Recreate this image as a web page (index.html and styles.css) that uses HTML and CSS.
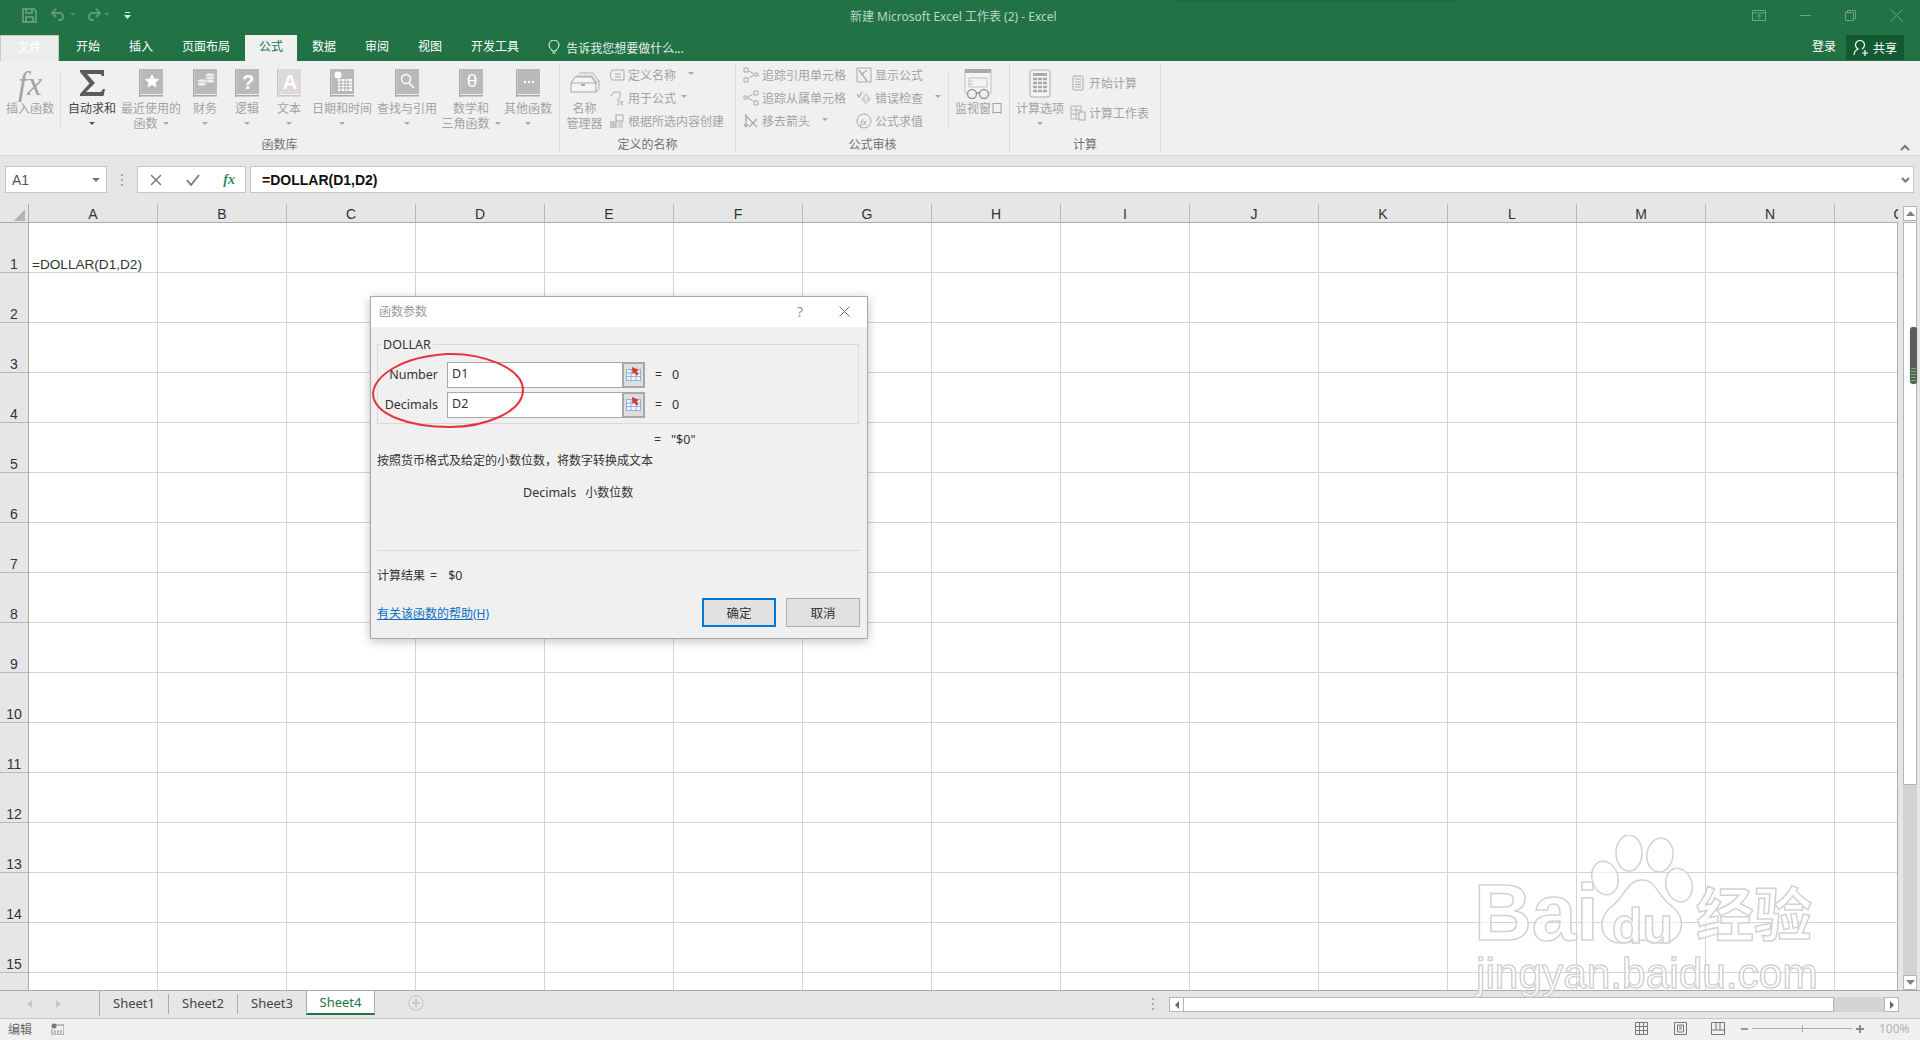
FILE: index.html
```html
<!DOCTYPE html>
<html lang="zh-CN">
<head>
<meta charset="UTF-8" />
<title>新建 Microsoft Excel 工作表 (2) - Excel</title>
<link rel="stylesheet" href="styles.css">
</head>
<body>

<svg class="defs" width="0" height="0">
  <symbol id="book" viewBox="0 0 30 32">
    <rect x="3" y="0" width="1.5" height="28" fill="#a8a8a8"/>
    <rect x="5" y="0" width="22" height="25" fill="#b9b9b9"/>
    <rect x="4" y="26" width="23" height="1.5" fill="#a8a8a8"/>
  </symbol>
  <symbol id="refedit" viewBox="0 0 15 14">
    <rect y="2" width="15" height="12" fill="#eef3fa"/>
    <path d="M0 2.500h15M0 6h15M0 9.500h15M0 13.500h15M.5 2v12M5 2v12M10 2v12M14.500 2v12" stroke="#7ea6d4" stroke-width=".8"/>
    <path d="M6 0l7 3-2.500 1.200 2 3-2 1.300-2-3-2 1.500z" fill="#d9352b"/>
  </symbol>
</svg>

<div class="topbar">
  <div class="strip"></div>
  <div class="titlerow">
    <svg class="qat-save" width="15" height="15" viewBox="0 0 15 15"><path d="M1 1h11l2 2v11H1z M4 1v4h6V1 M4 14V9h7v5" fill="none" stroke="#6fa287" stroke-width="1.6"/></svg>
    <svg class="qat-undo" width="16" height="13" viewBox="0 0 16 13"><path d="M5 1L1 5l4 4M1 5h9a4 4 0 0 1 0 7H7" fill="none" stroke="#5f9a7a" stroke-width="2"/></svg>
    <span class="qat-caret"></span>
    <svg class="qat-redo" width="16" height="13" viewBox="0 0 16 13"><path d="M11 1l4 4-4 4M15 5H6a4 4 0 0 0 0 7h3" fill="none" stroke="#5f9a7a" stroke-width="2"/></svg>
    <span class="qat-caret"></span>
    <svg class="qat-more" width="7" height="7" viewBox="0 0 7 7"><path d="M1 0h5v1H1z M0 3h7L3.5 7z" fill="#dfeee5"/></svg>
    <div class="doc-title">新建 Microsoft Excel 工作表 (2) - Excel</div>
    <div class="win-btns">
      <svg width="14" height="11" viewBox="0 0 14 11"><path d="M.5.5h13v10H.5zM.5 3h13M7 9V5M5 6.5L7 4.500l2 2" fill="none" stroke="#6fa287"/></svg>
      <svg width="11" height="11" viewBox="0 0 11 11"><path d="M0 5.500h11" stroke="#6fa287"/></svg>
      <svg width="11" height="11" viewBox="0 0 11 11"><path d="M.5 2.500h8v8h-8zM2.500 2.500v-2h8v8h-2" fill="none" stroke="#6fa287"/></svg>
      <svg width="13" height="13" viewBox="0 0 13 13"><path d="M.5.5l12 12M12.500.5l-12 12" stroke="#6fa287"/></svg>
    </div>
  </div>
  <div class="tabrow">
    <div class="tab tab-file">文件</div>
    <div class="tab">开始</div>
    <div class="tab">插入</div>
    <div class="tab">页面布局</div>
    <div class="tab tab-active">公式</div>
    <div class="tab">数据</div>
    <div class="tab">审阅</div>
    <div class="tab">视图</div>
    <div class="tab">开发工具</div>
    <div class="tellme">
      <svg width="12" height="15" viewBox="0 0 12 15"><path d="M4 11C3.500 8.500 1 8 1 5a5 5 0 0 1 10 0c0 3-2.500 3.500-3 6zM4.500 13h3" fill="none" stroke="#fff"/></svg>
      <span>告诉我您想要做什么...</span>
    </div>
    <div class="login">登录</div>
    <div class="share">
      <svg width="16" height="16" viewBox="0 0 16 16"><path d="M1 15c0-4 2-5 4-6a4.500 4.500 0 1 1 4 0M9 13h6M12 10v6" fill="none" stroke="#fff" stroke-width="1.200"/></svg>
      <span>共享</span>
    </div>
  </div>
</div>

<div class="ribbon">
  <div class="group g1">
    <div class="group-body">
      <div class="big w60"><div class="fx-glyph">fx</div><span>插入函数</span></div>
      <div class="mini-sep"></div>
      <div class="big w60 dark">
        <svg class="big-icon" viewBox="0 0 30 32"><path d="M3 1H27V7H25L23.500 5H10L18 14L9 23H24L26 20H28L26.500 27H3V25L12.500 14.500L3 3Z" fill="#5a5a5a"/></svg>
        <span>自动求和</span><i class="caret"></i>
      </div>
      <div class="big w58">
        <svg class="big-icon" viewBox="0 0 30 32"><use href="#book"/><path d="M16 5l2.200 4.600 5 .6-3.700 3.400 1 5-4.500-2.500-4.500 2.500 1-5-3.700-3.400 5-.6z" fill="#fff"/></svg>
        <span>最近使用的</span><span>函数<i class="caret inline"></i></span>
      </div>
      <div class="big w50">
        <svg class="big-icon" viewBox="0 0 30 32"><use href="#book"/><g fill="#eee" stroke="#b9b9b9" stroke-width=".6"><ellipse cx="20" cy="6" rx="4.500" ry="2"/><ellipse cx="20" cy="9" rx="4.500" ry="2"/><ellipse cx="20" cy="12" rx="4.500" ry="2"/><ellipse cx="12" cy="12" rx="4.500" ry="2"/><ellipse cx="12" cy="15" rx="4.500" ry="2"/></g></svg>
        <span>财务</span><i class="caret"></i>
      </div>
      <div class="big w34">
        <svg class="big-icon" viewBox="0 0 30 32"><use href="#book"/><text class="book-text" x="16" y="20" text-anchor="middle">?</text></svg>
        <span>逻辑</span><i class="caret"></i>
      </div>
      <div class="big w50">
        <svg class="big-icon" viewBox="0 0 30 32"><rect x="3" width="1.500" height="28" fill="#c8c4c8"/><rect x="5" width="22" height="25" fill="#dcd8dc"/><rect x="4" y="26" width="23" height="1.500" fill="#c8c4c8"/><text class="book-text" x="16" y="20" text-anchor="middle">A</text></svg>
        <span>文本</span><i class="caret"></i>
      </div>
      <div class="big w56">
        <svg class="big-icon" viewBox="0 0 30 32"><use href="#book"/><circle cx="11" cy="6" r="3.500" fill="#fff"/><rect x="11" y="10" width="14" height="12" fill="#fff"/><path d="M11 13h14M11 16h14M11 19h14M14 10v12M18 10v12M21 10v12" stroke="#999" stroke-width=".8"/></svg>
        <span>日期和时间</span><i class="caret"></i>
      </div>
      <div class="big w74">
        <svg class="big-icon" viewBox="0 0 30 32"><use href="#book"/><circle cx="14" cy="10" r="4.500" fill="none" stroke="#fff" stroke-width="1.500"/><path d="M17 14l5 5" stroke="#fff" stroke-width="1.500"/></svg>
        <span>查找与引用</span><i class="caret"></i>
      </div>
      <div class="big w54">
        <svg class="big-icon" viewBox="0 0 30 32"><use href="#book"/><text class="book-text theta" x="16" y="18" text-anchor="middle">θ</text></svg>
        <span>数学和</span><span>三角函数<i class="caret inline"></i></span>
      </div>
      <div class="big w60">
        <svg class="big-icon" viewBox="0 0 30 32"><use href="#book"/><circle cx="12" cy="13" r="1.200" fill="#fff"/><circle cx="16" cy="13" r="1.200" fill="#fff"/><circle cx="20" cy="13" r="1.200" fill="#fff"/></svg>
        <span>其他函数</span><i class="caret"></i>
      </div>
    </div>
    <div class="group-label">函数库</div>
  </div>

  <div class="group g2">
    <div class="group-body">
      <div class="big w49">
        <svg class="big-icon" viewBox="0 0 30 32"><path d="M26 14l3-3v9l-3 3M9 4h14l5 7M6 7h16l4 6" fill="none" stroke="#b0b0b0"/><path d="M1 14l4-6h16l5 6" fill="#f4f4f4" stroke="#a8a8a8"/><path d="M1 14h25v9H1z" fill="#f4f4f4" stroke="#a8a8a8"/><rect x="11" y="15" width="4" height="2" fill="#a8a8a8"/></svg>
        <span>名称</span><span>管理器</span>
      </div>
      <div class="smalls">
        <div class="small"><svg width="16" height="16" viewBox="0 0 16 16"><path d="M3 3h12v10H3L1 8z" fill="none" stroke="#aaa"/><path d="M6 7h6M6 10h6" stroke="#aaa"/></svg><span>定义名称</span><i class="caret inline far"></i></div>
        <div class="small"><svg width="16" height="16" viewBox="0 0 16 16"><path d="M2 6l3-4h6v5l-3 3" fill="none" stroke="#aaa"/><text class="mini-fx" x="8" y="15">fx</text></svg><span>用于公式</span><i class="caret inline"></i></div>
        <div class="small"><svg width="16" height="16" viewBox="0 0 16 16"><rect x="1" y="8" width="7" height="7" fill="#c4c4c4"/><rect x="7" y="2" width="7" height="6" fill="none" stroke="#aaa"/><rect x="9" y="9" width="5" height="6" fill="#d4d4d4"/></svg><span>根据所选内容创建</span></div>
      </div>
    </div>
    <div class="group-label">定义的名称</div>
  </div>

  <div class="group g3">
    <div class="group-body">
      <div class="smalls col-trace">
        <div class="small"><svg width="16" height="16" viewBox="0 0 16 16"><path d="M1 1h4v4H1zM1 11h4v4H1zM12 6h3v3h-3zM6 4l5 3M6 11l5-3" fill="none" stroke="#aaa"/></svg><span>追踪引用单元格</span></div>
        <div class="small"><svg width="16" height="16" viewBox="0 0 16 16"><path d="M1 6h3v3H1zM11 1h4v4h-4zM11 11h4v4h-4zM5 7l5-3M5 8l5 3" fill="none" stroke="#aaa"/></svg><span>追踪从属单元格</span></div>
        <div class="small"><svg width="16" height="16" viewBox="0 0 16 16"><path d="M3 1v13M3 14l-2-3M3 14l2-3M2 2l12 12M14 6l-8 8" fill="none" stroke="#aaa" stroke-width="1.300"/></svg><span>移去箭头</span><i class="caret inline far"></i></div>
      </div>
      <div class="smalls col-audit">
        <div class="small"><svg width="16" height="16" viewBox="0 0 16 16"><path d="M1 1h14v14H1z" fill="none" stroke="#aaa"/><path d="M3 3l8 11M11 3l-6 5" fill="none" stroke="#aaa" stroke-width="1.300"/></svg><span>显示公式</span></div>
        <div class="small"><svg width="16" height="16" viewBox="0 0 16 16"><path d="M1 4l2 3 3-5" fill="none" stroke="#aaa" stroke-width="1.300"/><path d="M10 3l5 6-5 6-5-6z" fill="#cfcfcf"/><path d="M10 6v4M10 11v1.500" stroke="#fff" stroke-width="1.400"/></svg><span>错误检查</span><i class="caret inline far"></i></div>
        <div class="small"><svg width="16" height="16" viewBox="0 0 16 16"><circle cx="8" cy="8" r="7" fill="none" stroke="#aaa"/><text class="mini-fx" x="4" y="12">fx</text></svg><span>公式求值</span></div>
      </div>
      <div class="mini-sep"></div>
      <div class="big w60">
        <svg class="big-icon" viewBox="0 0 30 32"><rect x="1" y="0" width="26" height="24" fill="#f4f4f4" stroke="#c4c4c4"/><rect x="1" y="0" width="26" height="4" fill="#aaa"/><path d="M5 9h18v9H5zM5 12h4M5 15h4" fill="none" stroke="#c0c0c0"/><circle cx="8" cy="25" r="4.500" fill="#f0f0f0" stroke="#999" stroke-width="1.500"/><circle cx="20" cy="25" r="4.500" fill="#f0f0f0" stroke="#999" stroke-width="1.500"/><path d="M12.500 24h3" stroke="#999" stroke-width="1.500"/></svg>
        <span>监视窗口</span>
      </div>
    </div>
    <div class="group-label">公式审核</div>
  </div>

  <div class="group g4">
    <div class="group-body">
      <div class="big w60">
        <svg class="big-icon" viewBox="0 0 30 32"><rect x="5" y="1" width="20" height="27" rx="2" fill="#f4f4f4" stroke="#aaa"/><rect x="8" y="4" width="14" height="3" fill="#aaa"/><path d="M8 10h14M8 14h14M8 18h14M8 22h14" stroke="#aaa" stroke-width="2.500" stroke-dasharray="4 1"/></svg>
        <span>计算选项</span><i class="caret"></i>
      </div>
      <div class="smalls calc">
        <div class="small"><svg width="16" height="16" viewBox="0 0 16 16"><rect x="3" y="1" width="10" height="14" rx="1" fill="none" stroke="#aaa"/><path d="M5 4h6M5 7h6M5 9.500h6M5 12h6" stroke="#aaa" stroke-width="1.200"/></svg><span>开始计算</span></div>
        <div class="small"><svg width="16" height="16" viewBox="0 0 16 16"><path d="M1 1h10v13H1zM1 5h10M1 9h10M6 1v13" fill="none" stroke="#b4b4b4"/><rect x="9" y="7" width="6" height="8" fill="#f0f0f0" stroke="#aaa"/></svg><span>计算工作表</span></div>
      </div>
    </div>
    <div class="group-label">计算</div>
  </div>

  <svg class="collapse" width="10" height="7" viewBox="0 0 10 7"><path d="M1 6l4-4 4 4" fill="none" stroke="#777" stroke-width="2"/></svg>
</div>

<div class="formulabar">
  <div class="namebox"><span>A1</span><i class="caret dark-caret"></i></div>
  <div class="grip"><b></b><b></b><b></b></div>
  <div class="fbtns">
    <svg width="12" height="12" viewBox="0 0 12 12"><path d="M1 1l10 10M11 1L1 11" stroke="#808080" stroke-width="1.600"/></svg>
    <svg width="14" height="12" viewBox="0 0 14 12"><path d="M1 6l4 5 8-10" fill="none" stroke="#808080" stroke-width="2"/></svg>
    <span class="fx-green">fx</span>
  </div>
  <div class="finput"><span>=DOLLAR(D1,D2)</span><svg width="9" height="6" viewBox="0 0 9 6"><path d="M1 1l3.500 3.500L8 1" fill="none" stroke="#777" stroke-width="2"/></svg></div>
</div>

<div class="workarea">
  <div class="sheet">
    <div class="colheads">
      <div class="corner"><svg width="11" height="12" viewBox="0 0 11 12"><path d="M11 0v12H0z" fill="#b4b4b4"/></svg></div>
      <div class="cols">
        <div class="col">A</div><div class="col">B</div><div class="col">C</div><div class="col">D</div><div class="col">E</div><div class="col">F</div><div class="col">G</div><div class="col">H</div><div class="col">I</div><div class="col">J</div><div class="col">K</div><div class="col">L</div><div class="col">M</div><div class="col">N</div><div class="col">O</div>
      </div>
    </div>
    <div class="sheetbody">
      <div class="rows">
        <div class="rowhead">1</div><div class="rowhead">2</div><div class="rowhead">3</div><div class="rowhead">4</div><div class="rowhead">5</div><div class="rowhead">6</div><div class="rowhead">7</div><div class="rowhead">8</div><div class="rowhead">9</div><div class="rowhead">10</div><div class="rowhead">11</div><div class="rowhead">12</div><div class="rowhead">13</div><div class="rowhead">14</div><div class="rowhead">15</div>
      </div>
      <div class="cells">
        <div class="cell-a1">=DOLLAR(D1,D2)</div>
      </div>
    </div>
  </div>
  <div class="vscroll">
    <div class="sbtn"><svg width="9" height="5" viewBox="0 0 9 5"><path d="M4.500 0L9 5H0z" fill="#808080"/></svg></div>
    <div class="vtrack-on"></div>
    <div class="vtrack-off"></div>
    <div class="sbtn"><svg width="9" height="5" viewBox="0 0 9 5"><path d="M0 0h9L4.500 5z" fill="#808080"/></svg></div>
  </div>
</div>

<div class="tabbar">
  <div class="tabnav">
    <svg width="5" height="8" viewBox="0 0 5 8"><path d="M5 0v8L0 4z" fill="#c8c8c8"/></svg>
    <svg width="5" height="8" viewBox="0 0 5 8"><path d="M0 0v8l5-4z" fill="#c8c8c8"/></svg>
  </div>
  <div class="stab">Sheet1</div>
  <div class="stab">Sheet2</div>
  <div class="stab">Sheet3</div>
  <div class="stab stab-active">Sheet4</div>
  <svg class="addsheet" width="16" height="16" viewBox="0 0 16 16"><circle cx="8" cy="8" r="7.300" fill="none" stroke="#c4c4c4"/><path d="M8 4v8M4 8h8" stroke="#c4c4c4" stroke-width="1.600"/></svg>
  <div class="hgrip"><b></b><b></b><b></b></div>
  <div class="hscroll">
    <div class="hbtn"><svg width="4" height="8" viewBox="0 0 4 8"><path d="M4 0v8L0 4z" fill="#666"/></svg></div>
    <div class="hthumb"></div>
    <div class="htrack"></div>
    <div class="hbtn"><svg width="4" height="8" viewBox="0 0 4 8"><path d="M0 0v8l4-4z" fill="#666"/></svg></div>
  </div>
</div>

<div class="statusbar">
  <span>编辑</span>
  <svg class="macro" width="13" height="12" viewBox="0 0 13 12"><circle cx="3" cy="3" r="2.500" fill="#777"/><path d="M5 2h8v10H1V6" fill="none" stroke="#888"/><path d="M3 8h8M3 10h8" stroke="#888" stroke-dasharray="2 1"/></svg>
  <div class="status-right">
    <svg width="13" height="13" viewBox="0 0 13 13"><path d="M.5.5h12v12H.5zM.5 4.500h12M.5 8.500h12M4.500.5v12M8.500.5v12" fill="none" stroke="#777"/></svg>
    <svg width="13" height="13" viewBox="0 0 13 13"><path d="M.5.5h12v12H.5zM3.500 3h6v7h-6zM5 5h3M5 7h3" fill="none" stroke="#777"/></svg>
    <svg width="14" height="13" viewBox="0 0 14 13"><path d="M.5.5h13v12H.5zM.5 8h13M5 .5V8M9 .5V8" fill="none" stroke="#777"/></svg>
    <div class="zoomer">
      <i class="zminus"></i>
      <div class="zslider"><i></i></div>
      <i class="zplus"></i>
    </div>
    <span class="zoomval">100%</span>
  </div>
</div>

<!-- scroll position thumb, sits over the scrollbar -->
<div class="vthumb"><i></i></div>

<div class="dialog">
  <div class="dlg-head">
    <span class="dlg-title">函数参数</span>
    <span class="dlg-help">?</span>
    <svg class="dlg-close" width="11" height="11" viewBox="0 0 11 11"><path d="M.5.5l10 10M10.500.5l-10 10" stroke="#777"/></svg>
  </div>
  <div class="dlg-body">
    <fieldset class="args">
      <legend>DOLLAR</legend>
      <div class="arg">
        <label>Number</label>
        <div class="arg-input">D1</div>
        <div class="refbtn"><svg width="15" height="14"><use href="#refedit"/></svg></div>
        <span class="eq">=</span><span>0</span>
      </div>
      <div class="arg">
        <label>Decimals</label>
        <div class="arg-input">D2</div>
        <div class="refbtn"><svg width="15" height="14"><use href="#refedit"/></svg></div>
        <span class="eq">=</span><span>0</span>
      </div>
    </fieldset>
    <div class="fn-result"><span class="eq">=</span><span>"$0"</span></div>
    <div class="fn-desc">按照货币格式及给定的小数位数，将数字转换成文本</div>
    <div class="fn-argdesc"><span>Decimals</span><span class="cjk12">小数位数</span></div>
    <div class="dlg-sep"></div>
    <div class="calc-result"><span class="cjk12">计算结果</span><span class="calc-eq">=</span><span>$0</span></div>
    <div class="dlg-foot">
      <a class="help-link">有关该函数的帮助(H)</a>
      <button class="dlg-btn dlg-ok">确定</button>
      <button class="dlg-btn">取消</button>
    </div>
  </div>
</div>

<svg class="redcircle" width="160" height="80" viewBox="0 0 160 80">
  <path d="M3 43C5 26 30 7 77 4C113 3 153 18 153 40C153 62 115 77 80 77C40 77 3 65 3 43Z" fill="none" stroke="#e8323c" stroke-width="2"/>
</svg>

<!-- baidu watermark, bottom right -->
<div class="watermark">
  <svg class="paw" width="110" height="110" viewBox="0 0 110 110">
    <g fill="rgba(255,255,255,.6)" stroke="#d2d2d2" stroke-width="1.500">
      <ellipse cx="20" cy="43" rx="13" ry="17" transform="rotate(-15 20 43)"/>
      <ellipse cx="44" cy="18" rx="13" ry="18"/>
      <ellipse cx="75" cy="20" rx="13" ry="17" transform="rotate(8 75 20)"/>
      <ellipse cx="94" cy="50" rx="13" ry="17" transform="rotate(-15 94 50)"/>
      <path d="M57 45C72 45 72 62 88 72C104 86 96 108 76 108C66 108 64 105 57 105C48 105 46 108 36 108C16 108 10 86 26 72C40 62 42 45 57 45Z"/>
    </g>
  </svg>
  <span class="wm-bai">Bai</span>
  <span class="wm-du">du</span>
  <span class="wm-jy">经验</span>
  <span class="wm-url">jingyan.baidu.com</span>
</div>

</body>
</html>
```

FILE: styles.css
```css
* { box-sizing: border-box; }
html, body { margin: 0; padding: 0; }
body {
  width: 1920px;
  height: 1040px;
  overflow: hidden;
  position: relative;
  background: #e6e6e6;
  font-family: "Noto Sans", "Noto Sans CJK SC", sans-serif;
  font-size: 12px;
  color: #444;
}
i { font-style: normal; display: block; }
.defs { position: absolute; }

/* title bar + tabs */
.topbar { height: 61px; background: #217346; color: #fff; position: relative; }
.strip { position: absolute; left: 1175px; top: 0; width: 282px; height: 2px; background: #1d6a3f; }
.titlerow { height: 35px; display: flex; align-items: center; padding-left: 22px; position: relative; }
.qat-save { margin-top: -5px; }
.qat-undo { margin-left: 14px; margin-top: -6px; }
.qat-redo { margin-left: 9px; margin-top: -6px; }
.qat-caret { margin: -6px 0 0 3px; border-top: 3px solid #4d8e6b; border-left: 3px solid transparent; border-right: 3px solid transparent; }
.qat-more { margin-left: 14px; margin-top: -5px; }
.doc-title { position: absolute; left: 850px; top: 8px; color: #bcd6c6; line-height: 17px; white-space: nowrap; }
.win-btns { position: absolute; left: 1752px; top: 9px; display: flex; align-items: center; gap: 34px; }
.tabrow { height: 26px; display: flex; align-items: stretch; gap: 1px; position: relative; }
.tab { padding: 0 14px; line-height: 24px; white-space: nowrap; }
.tab-file { width: 59px; padding: 0; text-align: center; background: #ececec; border: 1px solid #c9c9c9; border-bottom: 0; margin-right: 2px; }
.tab-active { background: #f0f0f0; color: #217346; }
.tellme { display: flex; align-items: center; gap: 6px; margin-left: 14px; color: #e6f0ea; padding-bottom: 1px; }
.login { position: absolute; left: 1812px; top: 0; line-height: 24px; }
.share { position: absolute; left: 1846px; top: 0; width: 58px; height: 25px; background: #125b32; display: flex; align-items: center; gap: 4px; padding-left: 7px; }

/* ribbon */
.ribbon { height: 95px; background: #f0f0f0; border-bottom: 1px solid #d6d6d6; display: flex; padding-top: 4px; position: relative; color: #a3a3a3; }
.group { height: 86px; border-right: 1px solid #dadada; display: flex; flex-direction: column; flex-shrink: 0; }
.g1 { width: 560px; }
.g2 { width: 176px; }
.g3 { width: 274px; }
.g4 { width: 151px; }
.group-body { height: 72px; display: flex; }
.g1 .mini-sep { margin-right: 1px; }
.group-label { height: 14px; line-height: 15px; text-align: center; color: #707070; }
.mini-sep { width: 1px; height: 56px; margin-top: 6px; background: #dcdcdc; flex-shrink: 0; }
.big { display: flex; flex-direction: column; align-items: center; padding-top: 4px; line-height: 15px; white-space: nowrap; flex-shrink: 0; }
.big.dark { color: #444; }
.big-icon { width: 30px; height: 32px; display: block; flex-shrink: 0; }
.w34 { width: 34px; }
.w49 { width: 49px; }
.w50 { width: 50px; }
.w54 { width: 54px; }
.w56 { width: 56px; }
.w58 { width: 58px; }
.w60 { width: 60px; }
.w74 { width: 74px; }
.fx-glyph { height: 32px; font: italic 33px/30px "Liberation Serif", serif; color: #a4a4a4; }
.book-text { font: bold 20px "Liberation Sans", sans-serif; fill: #fff; }
.theta { font-weight: normal; font-size: 19px; }
.mini-fx { font: italic 9px "Liberation Serif", serif; fill: #999; }
.caret { width: 0; height: 0; margin-top: 6px; border-top: 3px solid #aaa; border-left: 3px solid transparent; border-right: 3px solid transparent; }
.dark .caret { border-top-color: #555; }
.caret.inline { display: inline-block; margin: 0 0 2px 5px; vertical-align: middle; }
.caret.far { margin-left: 12px; }
.smalls { display: flex; flex-direction: column; flex-shrink: 0; margin-top: -2px; }
.small { height: 23px; display: flex; align-items: center; white-space: nowrap; }
.small svg { width: 16px; height: 16px; margin-right: 3px; flex-shrink: 0; }
.col-trace { width: 120px; padding-left: 7px; }
.col-audit { width: 92px; }
.smalls.calc { margin-top: 3px; }
.calc .small { height: 30px; }
.collapse { position: absolute; right: 10px; bottom: 4px; }

/* formula bar */
.formulabar { height: 48px; display: flex; align-items: flex-start; padding: 10px 6px 0 5px; color: #666; }
.namebox { width: 102px; height: 27px; background: #fff; border: 1px solid #c6c6c6; display: flex; align-items: center; justify-content: space-between; padding: 0 6px; font: 14px "Liberation Sans", sans-serif; color: #555; }
.dark-caret { margin: 0; border-top: 4px solid #777; border-left-width: 4px; border-right-width: 4px; }
.grip { width: 30px; height: 27px; display: flex; flex-direction: column; align-items: center; justify-content: center; gap: 3px; }
.grip b, .hgrip b { display: block; width: 2px; height: 2px; background: #aaa; }
.fbtns { width: 109px; height: 27px; background: #fff; border: 1px solid #c6c6c6; display: flex; align-items: center; justify-content: space-between; padding: 0 10px 0 12px; }
.fx-green { font: italic bold 14px "Liberation Serif", serif; color: #2f8a5b; }
.finput { margin-left: 4px; flex: 1; height: 27px; background: #fff; border: 1px solid #c6c6c6; display: flex; align-items: center; justify-content: space-between; padding: 0 3px 0 11px; font: bold 14px "Liberation Sans", sans-serif; color: #111; }

/* sheet */
.workarea { height: 786px; display: flex; }
.sheet { width: 1898px; display: flex; flex-direction: column; }
.colheads { height: 19px; display: flex; border-bottom: 1px solid #ababab; }
.corner { width: 29px; padding: 4px 0 0 14px; border-right: 1px solid #ababab; flex-shrink: 0; }
.cols { display: flex; width: 1869px; overflow: hidden; }
.col { width: 129px; flex-shrink: 0; border-right: 1px solid #b8b8b8; text-align: center; font: 14px/20px "Liberation Sans", sans-serif; color: #333; }
.sheetbody { flex: 1; display: flex; overflow: hidden; }
.rows { width: 29px; flex-shrink: 0; border-right: 1px solid #ababab; }
.rowhead { height: 50px; border-bottom: 1px solid #b8b8b8; display: flex; align-items: flex-end; justify-content: center; font: 14px/16px "Liberation Sans", sans-serif; color: #333; }
.cells {
  width: 1869px;
  background-color: #fff;
  background-image:
    repeating-linear-gradient(to right, transparent 0 128px, #d4d4d4 128px 129px),
    repeating-linear-gradient(to bottom, transparent 0 49px, #d4d4d4 49px 50px);
  border-right: 1px solid #ababab;
}
.cell-a1 { padding: 33px 0 0 3px; font: 13.6px/17px "Liberation Sans", sans-serif; color: #333; }
.vscroll { width: 22px; padding: 2px 3px 0 5px; display: flex; flex-direction: column; }
.sbtn { height: 15px; background: #fff; border: 1px solid #b4b4b4; display: flex; align-items: center; justify-content: center; flex-shrink: 0; }
.vtrack-on { height: 563px; margin-top: 1px; background: #fff; border: 1px solid #b4b4b4; flex-shrink: 0; }
.vtrack-off { flex: 1; background: #d4d4d4; }
.vthumb { position: absolute; left: 1910px; top: 327px; width: 7px; height: 57px; border-radius: 3px; background: #5c5c5c; box-shadow: 0 0 2px rgba(0,0,0,.2); }
.vthumb i { position: absolute; left: 1px; right: 1px; bottom: 2px; height: 14px; background: repeating-linear-gradient(to bottom, #55c46b 0 1px, #5c5c5c 1px 3px); }

/* bottom tabs */
.tabbar { height: 29px; display: flex; align-items: flex-start; border-top: 1px solid #ababab; border-bottom: 1px solid #c8c8c8; }
.tabnav { width: 100px; height: 25px; display: flex; align-items: center; gap: 24px; padding-left: 27px; border-right: 1px solid #ababab; flex-shrink: 0; }
.stab { width: 69px; height: 20px; margin-top: 3px; text-align: center; line-height: 18px; font-size: 13px; color: #444; border-right: 1px solid #ababab; flex-shrink: 0; }
.stab-active { height: 24px; margin-top: 0; margin-left: -1px; background: #fff; color: #217346; border-left: 1px solid #ababab; border-right: 1px solid #ababab; border-bottom: 2px solid #217346; line-height: 22px; }
.addsheet { margin: 4px 0 0 33px; flex-shrink: 0; }
.hgrip { margin: 7px 0 0 728px; display: flex; flex-direction: column; gap: 3px; }
.hscroll { margin: 6px 0 0 15px; width: 730px; height: 15px; display: flex; }
.hbtn { width: 15px; background: #fff; border: 1px solid #b4b4b4; display: flex; align-items: center; justify-content: center; flex-shrink: 0; }
.hthumb { width: 650px; background: #fff; border: 1px solid #b4b4b4; border-left: 0; flex-shrink: 0; }
.htrack { flex: 1; background: #d4d4d4; }

/* status bar */
.statusbar { height: 21px; background: #f0f0f0; display: flex; align-items: center; padding: 0 0 2px 8px; color: #666; position: relative; }
.macro { margin-left: 19px; }
.status-right { position: absolute; left: 1635px; top: 3px; display: flex; align-items: center; }
.status-right svg:nth-child(2) { margin-left: 26px; }
.status-right svg:nth-child(3) { margin-left: 24px; }
.zoomer { display: flex; align-items: center; margin-left: 16px; }
.zminus { width: 7px; height: 2px; background: #999; }
.zslider { width: 100px; height: 1px; margin: 0 4px; background: #aaa; position: relative; }
.zslider i { position: absolute; left: 50px; top: -3px; width: 1px; height: 7px; background: #aaa; }
.zplus { width: 8px; height: 8px; background: linear-gradient(#888,#888) center/8px 2px no-repeat, linear-gradient(#888,#888) center/2px 8px no-repeat; }
.zoomval { margin-left: 15px; color: #b4b4b4; line-height: 13px; }

/* function arguments dialog */
.dialog { position: absolute; left: 370px; top: 296px; width: 498px; height: 343px; background: #f0f0f0; border: 1px solid #a8a8a8; box-shadow: 0 2px 10px rgba(0,0,0,.25); font-size: 12.5px; color: #333; }
.dlg-head { height: 30px; background: #fff; display: flex; align-items: center; padding: 0 17px 2px 8px; }
.dlg-title { color: #999; flex: 1; font-size: 12px; }
.dlg-help { color: #999; font-size: 14px; margin-right: 36px; }
.dlg-body { padding: 0 7px 0 6px; }
.args { margin: 9px 1px 0 0; padding: 10px 0 5px; border: 1px solid #dadada; height: 88px; }
.args legend { margin-left: 3px; padding: 0 2px; line-height: 16px; position: relative; top: 1px; }
.arg { display: flex; align-items: center; height: 26px; margin-bottom: 4px; }
.arg label, .arg span { padding-bottom: 2px; }
.arg label { width: 60px; text-align: right; margin-right: 9px; }
.arg-input { width: 176px; height: 26px; background: #fff; border: 1px solid #a8a8a8; padding-left: 4px; line-height: 22px; }
.refbtn { width: 22px; height: 26px; background: #dedede; border: 2px solid #a8a8a8; border-left-width: 1px; display: flex; align-items: center; justify-content: center; padding-bottom: 2px; }
.eq { margin-left: 10px; width: 17px; }
.fn-result { display: flex; margin-top: 8px; line-height: 16px; padding-left: 277px; }
.fn-result .eq { margin-left: 0; }
.fn-desc { margin-top: 5px; line-height: 16px; font-size: 12px; }
.fn-argdesc { margin-top: 16px; padding-left: 146px; line-height: 16px; display: flex; gap: 9px; }
.cjk12 { font-size: 12px; }
.dlg-sep { margin-top: 49px; height: 1px; background: #dcdcdc; margin-right: -1px; }
.calc-result { margin-top: 17px; line-height: 16px; display: flex; }
.calc-eq { margin-left: 5px; margin-right: 11px; }
.dlg-foot { margin-top: 14px; display: flex; align-items: center; }
.help-link { flex: 1; color: #0a6fc2; text-decoration: underline; font-size: 12px; }
.dlg-btn { width: 74px; height: 29px; background: #e1e1e1; border: 1px solid #adadad; font: inherit; color: #333; padding: 0; margin-left: 10px; }
.dlg-ok { border: 2px solid #0078d7; }
.redcircle { position: absolute; left: 370px; top: 350px; }

/* watermark */
.watermark { position: absolute; left: 1470px; top: 830px; width: 360px; height: 170px; filter: blur(.5px); }
.paw { position: absolute; left: 115px; top: 5px; }
.watermark span { position: absolute; white-space: nowrap; color: rgba(255,255,255,.7); -webkit-text-stroke: 1.5px #d2d2d2; font-family: "Liberation Sans", sans-serif; }
.wm-bai { left: 4px; top: 48px; font-size: 80px; line-height: 70px; font-weight: bold; }
.wm-du { left: 142px; top: 74px; font-size: 50px; line-height: 44px; font-weight: bold; }
.watermark .wm-jy { left: 226px; top: 50px; font-size: 58px; line-height: 62px; font-family: "Noto Sans CJK SC", sans-serif; font-weight: bold; }
.wm-url { left: 6px; top: 118px; font-size: 42.4px; line-height: 52px; }
```
